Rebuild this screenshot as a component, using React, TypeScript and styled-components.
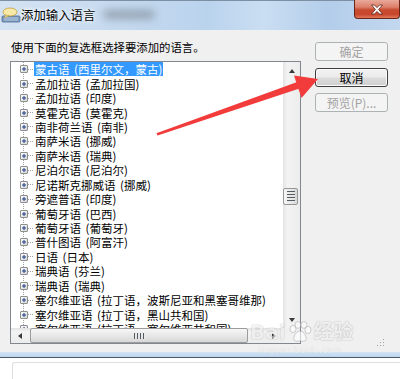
import React from "react";
import styled, { createGlobalStyle } from "styled-components";

const GlobalStyle = createGlobalStyle`
  html, body {
    margin: 0;
    padding: 0;
    background: #ffffff;
  }
  body {
    font-family: "Noto Sans CJK SC", "Noto Sans", sans-serif;
  }
`;

const languages = [
  "蒙古语 (西里尔文，蒙古)",
  "孟加拉语 (孟加拉国)",
  "孟加拉语 (印度)",
  "莫霍克语 (莫霍克)",
  "南非荷兰语 (南非)",
  "南萨米语 (挪威)",
  "南萨米语 (瑞典)",
  "尼泊尔语 (尼泊尔)",
  "尼诺斯克挪威语 (挪威)",
  "旁遮普语 (印度)",
  "葡萄牙语 (巴西)",
  "葡萄牙语 (葡萄牙)",
  "普什图语 (阿富汗)",
  "日语 (日本)",
  "瑞典语 (芬兰)",
  "瑞典语 (瑞典)",
  "塞尔维亚语 (拉丁语，波斯尼亚和黑塞哥维那)",
  "塞尔维亚语 (拉丁语，黑山共和国)",
  "塞尔维亚语 (拉丁语，塞尔维亚共和国)",
];

const Screen = styled.div`
  position: relative;
  width: 400px;
  height: 379px;
  overflow: hidden;
  display: flex;
  flex-direction: column;
  background: #ffffff;
`;

const TitleBar = styled.div`
  flex: none;
  height: 29px;
  border-top: 1px solid #7d8fa3;
  display: flex;
  align-items: center;
  background: linear-gradient(
    90deg,
    #d4e3f3 0%,
    #c6daef 28%,
    #bad3ed 52%,
    #cadef2 66%,
    #b3cdea 82%,
    #c3d8ef 100%
  );
`;

const TitleText = styled.span`
  font-size: 12.4px;
  line-height: 16px;
  color: #000;
  margin-top: -2px;
  text-shadow: 0 0 5px #ffffff, 0 0 3px #ffffff;
`;

const Smudge = styled.span`
  width: 52px;
  height: 9px;
  margin: -3px 0 0 8px;
  border-radius: 5px;
  background: #7f8c99;
  filter: blur(4px);
  opacity: 0.7;
`;

const CloseButton = styled.div`
  align-self: flex-start;
  margin: -1px 0 0 auto;
  width: 46px;
  height: 19px;
  box-sizing: border-box;
  border: 1px solid #6d2418;
  border-top: none;
  border-radius: 0 0 4px 4px;
  background: linear-gradient(
    180deg,
    #e9aa9b 0%,
    #dc7e69 40%,
    #c74a2f 55%,
    #c8472c 80%,
    #df7a5c 100%
  );
  display: flex;
  align-items: center;
  justify-content: center;
`;

const Body = styled.div`
  flex: none;
  height: 322px;
  box-sizing: border-box;
  padding: 10px 0 0 10px;
  background: #f0f0f0;
  display: flex;
`;

const LeftColumn = styled.div`
  width: 291px;
  display: flex;
  flex-direction: column;
`;

const Prompt = styled.div`
  height: 15px;
  margin: 0 0 6px 1px;
  font-size: 11.4px;
  line-height: 15px;
  color: #000;
  white-space: nowrap;
`;

const ListBox = styled.div`
  width: 291px;
  height: 283px;
  box-sizing: border-box;
  border: 1px solid #828790;
  background: #ffffff;
  display: grid;
  grid-template-columns: 1fr 17px;
  grid-template-rows: 1fr 15px;
`;

const Tree = styled.div`
  overflow: hidden;
  background-image: linear-gradient(to bottom, #a3a3a3 50%, transparent 50%);
  background-size: 1px 2px;
  background-position: 12px 0;
  background-repeat: repeat-y;
`;

const Row = styled.div`
  height: 14.44px;
  display: flex;
  align-items: center;
  padding-left: 9px;
  white-space: nowrap;
  overflow: hidden;
`;

const Connector = styled.span`
  width: 6px;
  height: 1px;
  flex: none;
  background-image: linear-gradient(to right, #a3a3a3 50%, transparent 50%);
  background-size: 2px 1px;
  background-repeat: repeat-x;
`;

const ItemLabel = styled.span<{ $selected?: boolean }>`
  padding: 0 1px;
  font-size: 11.5px;
  line-height: 14px;
  word-spacing: 2px;
  color: ${(p) => (p.$selected ? "#ffffff" : "#000000")};
  background: ${(p) => (p.$selected ? "#3399ff" : "transparent")};
`;

const VScroll = styled.div`
  display: flex;
  flex-direction: column;
  background: linear-gradient(90deg, #e3e3e3 0%, #f3f3f3 25%, #ececec 100%);
`;

const HScroll = styled.div`
  display: flex;
  background: linear-gradient(180deg, #e3e3e3 0%, #f3f3f3 25%, #ececec 100%);
`;

const ScrollCorner = styled.div`
  background: #f0f0f0;
`;

const ArrowButton = styled.div<{ $w: number; $h: number }>`
  flex: none;
  width: ${(p) => p.$w}px;
  height: ${(p) => p.$h}px;
  display: flex;
  align-items: center;
  justify-content: center;
`;

const Arrow = styled.span<{ $dir: "up" | "down" | "left" | "right" }>`
  width: 0;
  height: 0;
  border: 3.5px solid transparent;
  ${(p) =>
    p.$dir === "up"
      ? "border-bottom: 4px solid #3a3a3a; border-top-width: 0;"
      : p.$dir === "down"
      ? "border-top: 4px solid #3a3a3a; border-bottom-width: 0;"
      : p.$dir === "left"
      ? "border-right: 4px solid #3a3a3a; border-left-width: 0;"
      : "border-left: 4px solid #3a3a3a; border-right-width: 0;"}
`;

const Track = styled.div`
  flex: 1;
  display: flex;
  flex-direction: column;
`;

const HTrack = styled.div`
  flex: 1;
  display: flex;
`;

const VThumb = styled.div`
  margin: 109px 0 0 0;
  width: 15px;
  height: 17px;
  box-sizing: border-box;
  border: 1px solid #979797;
  border-radius: 2px;
  background: linear-gradient(90deg, #f6f6f6 0%, #e6e6e6 60%, #d6d6d6 100%);
  display: flex;
  flex-direction: column;
  align-items: center;
  justify-content: center;
  gap: 1px;
`;

const HThumb = styled.div`
  margin-left: 1px;
  width: 218px;
  height: 15px;
  box-sizing: border-box;
  border: 1px solid #9c9c9c;
  border-radius: 2px;
  background: linear-gradient(180deg, #f6f6f6 0%, #e8e8e8 50%, #d8d8d8 100%);
  display: flex;
  align-items: center;
  justify-content: center;
  gap: 1px;
`;

const GripLine = styled.span<{ $vertical?: boolean }>`
  width: ${(p) => (p.$vertical ? "1px" : "8px")};
  height: ${(p) => (p.$vertical ? "6px" : "1px")};
  background: #555b62;
  border-${(p) => (p.$vertical ? "right" : "bottom")}: 1px solid #e8e8e8;
`;

const RightColumn = styled.div`
  margin-left: 14px;
  width: 73px;
  padding-top: 2px;
  display: flex;
  flex-direction: column;
  gap: 6.5px;
`;

const DialogButton = styled.div<{ $disabled?: boolean; $default?: boolean }>`
  height: 19px;
  box-sizing: border-box;
  border: 1px solid
    ${(p) => (p.$disabled ? "#adb2b5" : p.$default ? "#3f3f3f" : "#707070")};
  border-radius: 3px;
  box-shadow: ${(p) => (p.$disabled ? "none" : "inset 0 0 0 1px #fbfbfb")};
  background: ${(p) =>
    p.$disabled
      ? "#f4f4f4"
      : "linear-gradient(180deg, #f3f3f3 0%, #ebebeb 48%, #dcdcdc 52%, #cfcfcf 100%)"};
  color: ${(p) => (p.$disabled ? "#a3a3a3" : "#000")};
  font-size: 12px;
  line-height: 17px;
  text-align: center;
  white-space: nowrap;
`;

const SizeGrip = styled.div`
  margin: auto 4px 6px auto;
  width: 8px;
  height: 8px;
  background-image: radial-gradient(circle, #9aa0a6 0.8px, transparent 1px);
  background-size: 3px 3px;
  clip-path: polygon(100% 0, 100% 100%, 0 100%);
`;

const FrameEdge = styled.div`
  flex: none;
  height: 5px;
  border-bottom: 1px solid #4b5967;
  background: linear-gradient(180deg, #d3e4f5 0%, #bcd4ec 100%);
`;

const Backdrop = styled.div`
  flex: 1;
  margin: 4px 0 0 12px;
  border-top: 1px solid #dedede;
  border-left: 1px solid #dedede;
  border-radius: 3px 0 0 0;
`;

const Watermark = styled.div`
  position: absolute;
  left: 250px;
  top: 321px;
  display: flex;
  flex-direction: column;
  align-items: flex-start;
  pointer-events: none;
  opacity: 0.7;
`;

const MarkTop = styled.div`
  display: flex;
  align-items: center;
  font-family: "DejaVu Sans", "Noto Sans CJK SC", sans-serif;
  font-weight: bold;
  font-size: 20px;
  line-height: 22px;
  color: rgba(255, 255, 255, 0.85);
  text-shadow: 0 0 1px rgba(0, 0, 0, 0.35), 0 0 2px rgba(0, 0, 0, 0.2);
`;

const MarkSub = styled.div`
  margin: 2px 0 0 8px;
  font-family: "DejaVu Sans", sans-serif;
  font-size: 9px;
  color: rgba(255, 255, 255, 0.9);
  text-shadow: 0 0 1px rgba(0, 0, 0, 0.3);
`;

const Annotation = styled.svg`
  position: absolute;
  left: 0;
  top: 0;
  pointer-events: none;
`;

const ExpandBox = () => (
  <svg width="8" height="8" viewBox="0 0 8 8" style={{ flex: "none" }}>
    <defs>
      <linearGradient id="eb" x1="0" y1="0" x2="1" y2="1">
        <stop offset="0" stopColor="#ffffff" />
        <stop offset="1" stopColor="#d4d4d4" />
      </linearGradient>
    </defs>
    <rect x="0.5" y="0.5" width="7" height="7" rx="0.5" fill="url(#eb)" stroke="#8e8f8f" />
    <path d="M2 4h4M4 2v4" stroke="#1e3f86" strokeWidth="1" />
  </svg>
);

const AppIcon = () => (
  <svg width="20" height="16" viewBox="0 0 20 16" style={{ margin: "-2px 0 0 1px" }}>
    <rect x="1" y="9" width="18" height="6" rx="1" fill="#7f9cc0" stroke="#4c6a91" strokeWidth="0.8" />
    <path d="M3 11h14M3 13h14" stroke="#c8d8ea" strokeWidth="0.8" />
    <ellipse cx="9" cy="5" rx="7" ry="4" fill="#f7eaa9" stroke="#c29e3a" strokeWidth="0.8" />
    <path d="M5 8l-2 3 5-2.3z" fill="#f7eaa9" stroke="#c29e3a" strokeWidth="0.6" />
  </svg>
);

const CloseGlyph = () => (
  <svg width="14" height="11" viewBox="0 0 14 11">
    <path
      d="M1.5 1h3l2.5 2.6L9.5 1h3L8.6 5.5l3.9 4.5h-3L7 7.4 4.5 10h-3l3.9-4.5z"
      fill="#ffffff"
      stroke="#5a1f14"
      strokeWidth="0.8"
      strokeLinejoin="round"
    />
  </svg>
);

const Paw = () => (
  <svg width="26" height="22" viewBox="0 0 26 22" style={{ margin: "0 1px" }}>
    <g fill="rgba(255,255,255,0.85)" stroke="rgba(0,0,0,0.3)" strokeWidth="0.8">
      <ellipse cx="6" cy="8" rx="3" ry="3.6" />
      <ellipse cx="11" cy="4" rx="3" ry="3.4" />
      <ellipse cx="17" cy="4" rx="3" ry="3.4" />
      <ellipse cx="21" cy="9" rx="3" ry="3.6" />
      <path d="M13 10c-4 0-7 6-6 9 1 2 4 1 6 1s5 1 6-1c1-3-2-9-6-9z" />
    </g>
  </svg>
);

export default function App() {
  return (
    <>
      <GlobalStyle />
      <Screen>
        <TitleBar>
          <AppIcon />
          <TitleText>添加输入语言</TitleText>
          <Smudge />
          <CloseButton>
            <CloseGlyph />
          </CloseButton>
        </TitleBar>

        <Body>
          <LeftColumn>
            <Prompt>使用下面的复选框选择要添加的语言。</Prompt>
            <ListBox>
              <Tree>
                {languages.map((name, i) => (
                  <Row key={name}>
                    <ExpandBox />
                    <Connector />
                    <ItemLabel $selected={i === 0}>{name}</ItemLabel>
                  </Row>
                ))}
              </Tree>
              <VScroll>
                <ArrowButton $w={17} $h={17}>
                  <Arrow $dir="up" />
                </ArrowButton>
                <Track>
                  <VThumb>
                    <GripLine />
                    <GripLine />
                    <GripLine />
                    <GripLine />
                  </VThumb>
                </Track>
                <ArrowButton $w={17} $h={17}>
                  <Arrow $dir="down" />
                </ArrowButton>
              </VScroll>
              <HScroll>
                <ArrowButton $w={18} $h={15}>
                  <Arrow $dir="left" />
                </ArrowButton>
                <HTrack>
                  <HThumb>
                    <GripLine $vertical />
                    <GripLine $vertical />
                    <GripLine $vertical />
                    <GripLine $vertical />
                  </HThumb>
                </HTrack>
                <ArrowButton $w={18} $h={15}>
                  <Arrow $dir="right" />
                </ArrowButton>
              </HScroll>
              <ScrollCorner />
            </ListBox>
          </LeftColumn>

          <RightColumn>
            <DialogButton $disabled>确定</DialogButton>
            <DialogButton $default>取消</DialogButton>
            <DialogButton $disabled>预览(P)...</DialogButton>
            <SizeGrip />
          </RightColumn>
        </Body>

        <FrameEdge />
        <Backdrop />

        <Watermark>
          <MarkTop>
            Bai
            <Paw />
            经验
          </MarkTop>
          <MarkSub>jingyan.baidu.com</MarkSub>
        </Watermark>

        <Annotation width="400" height="379" viewBox="0 0 400 379">
          <polygon points="156.4,133.2 157.6,135.6 299.5,88.5 297.2,82" fill="#f23b3b" />
          <polygon points="318,79 294,75.5 301.5,98" fill="#f23b3b" />
        </Annotation>
      </Screen>
    </>
  );
}
